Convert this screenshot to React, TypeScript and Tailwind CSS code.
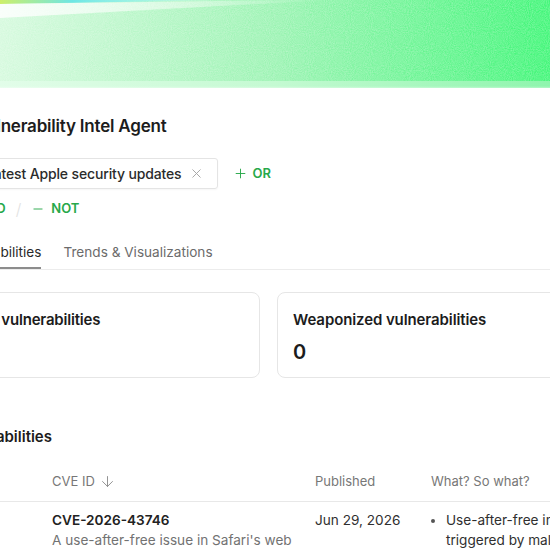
import React from 'react';
import { ArrowDown, Plus, Minus, X } from 'lucide-react';

const font = { fontFamily: 'Inter, "Noto Sans", sans-serif' };

function Banner() {
  return (
    <div className="relative h-[92px] w-full overflow-hidden">
      <svg width="100%" height="92" viewBox="0 0 550 92" preserveAspectRatio="none" className="block">
        <defs>
          <linearGradient id="band" x1="0" y1="0" x2="1" y2="0">
            <stop offset="0" stopColor="#d1f9da" />
            <stop offset="0.5" stopColor="#90f2aa" />
            <stop offset="1" stopColor="#2cf569" />
          </linearGradient>
          <linearGradient id="strip" x1="0" y1="0" x2="1" y2="0">
            <stop offset="0" stopColor="#e2fde9" />
            <stop offset="0.5" stopColor="#c4fad2" />
            <stop offset="1" stopColor="#8ef5ad" />
          </linearGradient>
          <linearGradient id="fade" x1="0" y1="0" x2="0" y2="1">
            <stop offset="0" stopColor="#ffffff" stopOpacity="0" />
            <stop offset="1" stopColor="#ffffff" stopOpacity="1" />
          </linearGradient>
          <linearGradient id="streak" x1="0" y1="0" x2="1" y2="0">
            <stop offset="0" stopColor="#ffffff" stopOpacity="0.85" />
            <stop offset="0.6" stopColor="#ffffff" stopOpacity="0.4" />
            <stop offset="1" stopColor="#ffffff" stopOpacity="0" />
          </linearGradient>
          <linearGradient id="topcol" x1="0" y1="0" x2="1" y2="0">
            <stop offset="0" stopColor="#cdef6a" />
            <stop offset="0.3" stopColor="#6ee6e4" />
            <stop offset="0.6" stopColor="#8cf0f0" stopOpacity="0.6" />
            <stop offset="1" stopColor="#ffffff" stopOpacity="0" />
          </linearGradient>
          <filter id="noise">
            <feTurbulence type="fractalNoise" baseFrequency="0.95" numOctaves="2" seed="4" />
            <feColorMatrix type="matrix" values="0 0 0 0 1  0 0 0 0 1  0 0 0 0 1  0 0 0 0.9 0" />
          </filter>
        </defs>
        <rect x="0" y="0" width="550" height="81" fill="url(#band)" />
        <rect x="0" y="0" width="550" height="81" filter="url(#noise)" opacity="0.45" />
        <polygon points="0,0 240,0 0,4" fill="url(#topcol)" />
        <polygon points="0,4 300,0 330,0 0,18" fill="url(#streak)" />
        <rect x="0" y="81" width="550" height="7" fill="url(#strip)" />
        <rect x="0" y="86" width="550" height="6" fill="url(#fade)" />
      </svg>
    </div>
  );
}

export default function App() {
  return (
    <div className="w-[550px] h-[550px] overflow-hidden bg-white text-[#1c1c1c]" style={font}>
      <Banner />
      <div className="ml-[-28px] w-[660px]">
        <h1 className="mt-[20px] ml-[2px] text-[17px] leading-7 font-semibold tracking-[-0.2px]">Vulnerability Intel Agent</h1>

        <div className="mt-[18px] flex items-center">
          <div className="flex h-[31px] items-center gap-[8px] rounded-[3px] border border-[#e4e4e4] pl-[13px] pr-[13px] text-[14px] font-medium tracking-[-0.15px] text-[#2b2b2b] shadow-[0_1px_2px_rgba(0,0,0,0.04)]">
            <span>Latest Apple security updates</span>
            <X size={15} strokeWidth={1.5} className="text-[#a3a3a3]" />
          </div>
          <button className="ml-[15px] flex items-center gap-[4px] text-[13px] font-semibold text-[#27a84a]">
            <Plus size={15} strokeWidth={1.5} />
            OR
          </button>
        </div>

        <div className="mt-[10px] ml-[-15px] flex h-[20px] items-center text-[13px] font-semibold text-[#27a84a]">
          <span className="flex items-center gap-[6px]">
            <Plus size={14} strokeWidth={1.6} />
            AND
          </span>
          <span className="ml-[10px] text-[16px] font-light text-[#e2e2e2]">/</span>
          <span className="ml-[10px] flex items-center gap-[6px]">
            <Minus size={14} strokeWidth={1.6} />
            NOT
          </span>
        </div>

        <div className="mt-[23px] flex border-b border-[#ececec] text-[13.6px] leading-5">
          <div className="ml-[-21px] border-b-2 border-[#8c8c8c] pb-[5px] text-[#2a2a2a]">Vulnerabilities</div>
          <div className="ml-[22px] pb-[5px] text-[#6b6b6b]">Trends &amp; Visualizations</div>
        </div>

        <div className="mt-[22px] ml-[-19px] grid grid-cols-[307px_288px] gap-[17px]">
          <div className="h-[86px] rounded-[8px] border border-[#e6e6e6] pl-[9px] pr-[15px] pt-[17px]">
            <div className="text-[15px] font-semibold leading-5 tracking-[-0.2px]">Total vulnerabilities</div>
            <div className="mt-[8px] text-[20px] font-semibold leading-7">0</div>
          </div>
          <div className="h-[86px] rounded-[8px] border border-[#e6e6e6] px-[15px] pt-[17px]">
            <div className="text-[15px] font-semibold leading-5 tracking-[-0.1px]">Weaponized vulnerabilities</div>
            <div className="mt-[8px] text-[20px] font-semibold leading-7">0</div>
          </div>
        </div>

        <h2 className="mt-[49px] ml-[-24px] text-[15px] font-semibold leading-5">Vulnerabilities</h2>

        <div className="mt-[24px] w-[640px]">
          <div className="grid grid-cols-[80px_263px_116px_1fr] border-b border-[#e8e8e8] pb-[10px] text-[13px] leading-5 text-[#777777]">
            <div />
            <div className="flex items-center gap-[4px]">
              CVE ID
              <ArrowDown size={17} strokeWidth={1.3} className="text-[#8a8a8a]" />
            </div>
            <div>Published</div>
            <div>What? So what?</div>
          </div>
          <div className="grid grid-cols-[80px_263px_116px_1fr] pt-[8px] text-[13.6px] leading-5">
            <div />
            <div className="pr-[10px]">
              <div className="font-semibold text-[#222222]">CVE-2026-43746</div>
              <div className="w-[250px] text-[#727272]">A use-after-free issue in Safari's web content process.</div>
            </div>
            <div className="text-[#2f2f2f]">Jun 29, 2026</div>
            <ul className="w-[200px] list-disc pl-[15px] text-[#2f2f2f] marker:text-[#555555]">
              <li>Use-after-free in WebKit triggered by malicious web content</li>
            </ul>
          </div>
        </div>
      </div>
    </div>
  );
}
